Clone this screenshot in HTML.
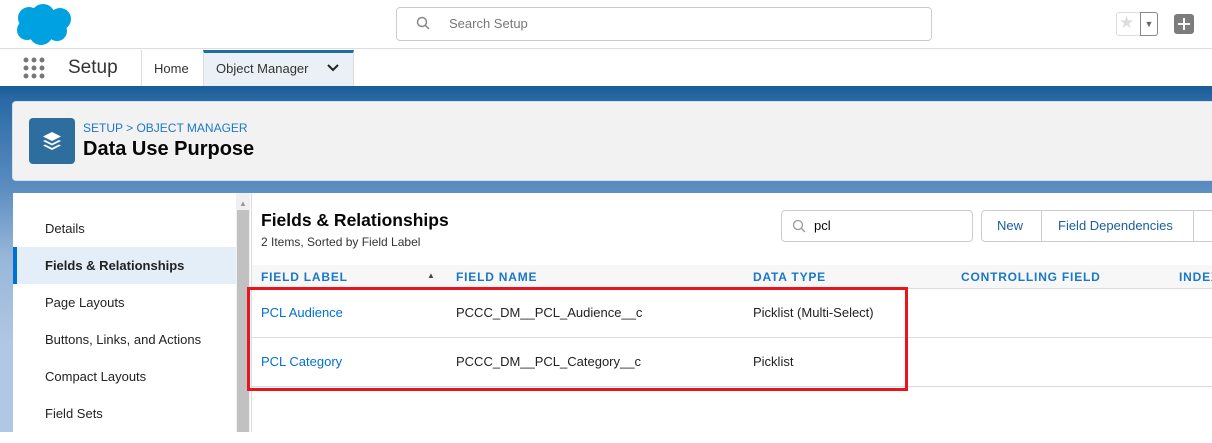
<!DOCTYPE html>
<html><head><style>
*{box-sizing:border-box;margin:0;padding:0}
body{width:1212px;height:443px;overflow:hidden;background:#fff;font-family:"Liberation Sans",sans-serif;position:relative;color:#080707}
.a{position:absolute}
.blue{color:#0070d2}
</style></head><body>
<div class="a" style="left:0;top:0;width:1212px;height:49px;background:#fff;border-bottom:1px solid #ddd"></div>
<svg class="a" style="left:15px;top:3px" width="60" height="42" viewBox="0 0 60 42"><g fill="#00a1e0"><circle cx="14" cy="15" r="11"/><circle cx="28" cy="13" r="12"/><circle cx="45" cy="16" r="11"/><circle cx="12" cy="27" r="10"/><circle cx="26" cy="30" r="12"/><circle cx="42" cy="28" r="10"/></g></svg>
<div class="a" style="left:396px;top:7px;width:536px;height:34px;border:1px solid #ccc;border-radius:4px"></div>
<svg class="a" style="left:416px;top:16px" width="14" height="14"><circle cx="6" cy="6" r="4.5" fill="none" stroke="#888" stroke-width="1.5"/><line x1="9.5" y1="9.5" x2="13" y2="13" stroke="#888" stroke-width="1.5"/></svg>
<div class="a" style="left:449px;top:16px;font-size:13px;color:#777">Search Setup</div>
<div class="a" style="left:1116px;top:12px;width:42px;height:24px;border:1px solid #ddd;border-radius:3px"></div>
<div class="a" style="left:1119px;top:13px;font-size:17px;color:#ddd">★</div>
<div class="a" style="left:1140px;top:12px;width:18px;height:24px;border:1px solid #888;border-radius:0 3px 3px 0;text-align:center;font-size:9px;color:#666;line-height:22px">▼</div>
<div class="a" style="left:1174px;top:14px;width:20px;height:20px;background:#7c7c7c;border-radius:3px"></div>
<div class="a" style="left:1178px;top:23px;width:12px;height:2px;background:#fff"></div>
<div class="a" style="left:1183px;top:18px;width:2px;height:12px;background:#fff"></div>
<div class="a" style="left:0;top:50px;width:1212px;height:36px;background:#fff"></div>
<svg class="a" style="left:23px;top:57px" width="24" height="24"><g fill="#777"><circle cx="3" cy="3" r="2.5"/><circle cx="11" cy="3" r="2.5"/><circle cx="19" cy="3" r="2.5"/><circle cx="3" cy="11" r="2.5"/><circle cx="11" cy="11" r="2.5"/><circle cx="19" cy="11" r="2.5"/><circle cx="3" cy="19" r="2.5"/><circle cx="11" cy="19" r="2.5"/><circle cx="19" cy="19" r="2.5"/></g></svg>
<div class="a" style="left:68px;top:57px;font-size:19px;color:#333">Setup</div>
<div class="a" style="left:141px;top:50px;width:1px;height:36px;background:#ddd"></div>
<div class="a" style="left:154px;top:61px;font-size:13px;color:#333">Home</div>
<div class="a" style="left:203px;top:50px;width:151px;height:36px;background:#eaf0f5;border-top:3px solid #1f6da3;border-left:1px solid #ddd;border-right:1px solid #ddd"></div>
<div class="a" style="left:216px;top:61px;font-size:13px;color:#333">Object Manager</div>
<svg class="a" style="left:326px;top:63px" width="14" height="10"><path d="M2 2 L7 7 L12 2" fill="none" stroke="#222" stroke-width="2"/></svg>
<div class="a" style="left:0;top:86px;width:1212px;height:357px;background:linear-gradient(#1e5b93 0px,#2a6aa6 15px,#5a8cc0 100px,#97b6d8 170px,#b0c8e3 260px)"></div>
<div class="a" style="left:0;top:86px;width:1212px;height:4px;background:#1a5e9c"></div>
<div class="a" style="left:12px;top:101px;width:1200px;height:80px;background:#f3f2f2;border:1px solid #d8dde6;border-right:none;border-radius:4px 0 0 4px"></div>
<div class="a" style="left:29px;top:118px;width:46px;height:46px;background:#2d6e9e;border-radius:4px"></div>
<svg class="a" style="left:40px;top:129px" width="24" height="24" viewBox="0 0 24 24"><g fill="#fff"><path d="M12 3 L21 7.5 L12 12 L3 7.5Z"/><path d="M5 11 L12 14.5 L19 11 L21 12 L12 16.5 L3 12Z"/><path d="M5 15.5 L12 19 L19 15.5 L21 16.5 L12 21 L3 16.5Z"/></g></svg>
<div class="a" style="left:83px;top:121px;font-size:12px;color:#1e78c8">SETUP &gt; OBJECT MANAGER</div>
<div class="a" style="left:83px;top:138px;font-size:20px;font-weight:bold;color:#080707">Data Use Purpose</div>
<div class="a" style="left:13px;top:193px;width:1199px;height:250px;background:#fff"></div>
<div class="a" style="left:0;top:432px;width:1212px;height:11px;background:#fff"></div>
<div style="font-size:13px;color:#222">
<div class="a" style="left:45px;top:221px">Details</div>
<div class="a" style="left:13px;top:247px;width:224px;height:37px;background:#e4eef8;border-left:4px solid #0070d2"></div>
<div class="a" style="left:45px;top:258px;font-weight:bold">Fields &amp; Relationships</div>
<div class="a" style="left:45px;top:295px">Page Layouts</div>
<div class="a" style="left:45px;top:332px">Buttons, Links, and Actions</div>
<div class="a" style="left:45px;top:369px">Compact Layouts</div>
<div class="a" style="left:45px;top:406px">Field Sets</div>
</div>
<div class="a" style="left:236px;top:193px;width:14px;height:239px;background:#f0f0f0"></div>
<div class="a" style="left:237px;top:210px;width:12px;height:222px;background:#c1c1c1"></div>
<div class="a" style="left:239px;top:199px;font-size:8px;color:#999">▲</div>
<div class="a" style="left:251px;top:193px;width:1px;height:239px;background:#ddd"></div>
<div class="a" style="left:261px;top:210px;font-size:17.5px;font-weight:bold">Fields &amp; Relationships</div>
<div class="a" style="left:261px;top:235px;font-size:12px;color:#333">2 Items, Sorted by Field Label</div>
<div class="a" style="left:781px;top:210px;width:192px;height:32px;border:1px solid #ccc;border-radius:4px"></div>
<svg class="a" style="left:792px;top:219px" width="14" height="14"><circle cx="6" cy="6" r="4.5" fill="none" stroke="#999" stroke-width="1.3"/><line x1="9.5" y1="9.5" x2="13" y2="13" stroke="#999" stroke-width="1.3"/></svg>
<div class="a" style="left:814px;top:218px;font-size:13px">pcl</div>
<div class="a" style="left:981px;top:210px;width:240px;height:32px;border:1px solid #ccc;border-radius:4px"></div>
<div class="a" style="left:1041px;top:210px;width:1px;height:32px;background:#ccc"></div>
<div class="a" style="left:1193px;top:210px;width:1px;height:32px;background:#ccc"></div>
<div class="a" style="left:997px;top:218px;font-size:13px;color:#1a5e9c">New</div>
<div class="a" style="left:1058px;top:218px;font-size:13px;color:#1a5e9c">Field Dependencies</div>
<div class="a" style="left:252px;top:265px;width:960px;height:24px;background:#f7f7f7;border-bottom:1px solid #ddd"></div>
<div style="font-size:12px;font-weight:bold;color:#1a78c8;letter-spacing:0.8px">
<div class="a" style="left:261px;top:270px">FIELD LABEL</div>
<div class="a" style="left:456px;top:270px">FIELD NAME</div>
<div class="a" style="left:753px;top:270px">DATA TYPE</div>
<div class="a" style="left:961px;top:270px">CONTROLLING FIELD</div>
<div class="a" style="left:1179px;top:270px">INDEXED</div>
</div>
<div class="a" style="left:427px;top:271px;font-size:8px;color:#444">▲</div>
<div class="a" style="left:252px;top:337px;width:960px;height:1px;background:#ddd"></div>
<div class="a" style="left:252px;top:386px;width:960px;height:1px;background:#ddd"></div>
<div style="font-size:13px;color:#222">
<div class="a blue" style="left:261px;top:305px">PCL Audience</div>
<div class="a" style="left:456px;top:305px">PCCC_DM__PCL_Audience__c</div>
<div class="a" style="left:753px;top:305px">Picklist (Multi-Select)</div>
<div class="a blue" style="left:261px;top:354px">PCL Category</div>
<div class="a" style="left:456px;top:354px">PCCC_DM__PCL_Category__c</div>
<div class="a" style="left:753px;top:354px">Picklist</div>
</div>
<div class="a" style="left:247px;top:287px;width:661px;height:104px;border:3px solid #e8141e"></div>
</body></html>
